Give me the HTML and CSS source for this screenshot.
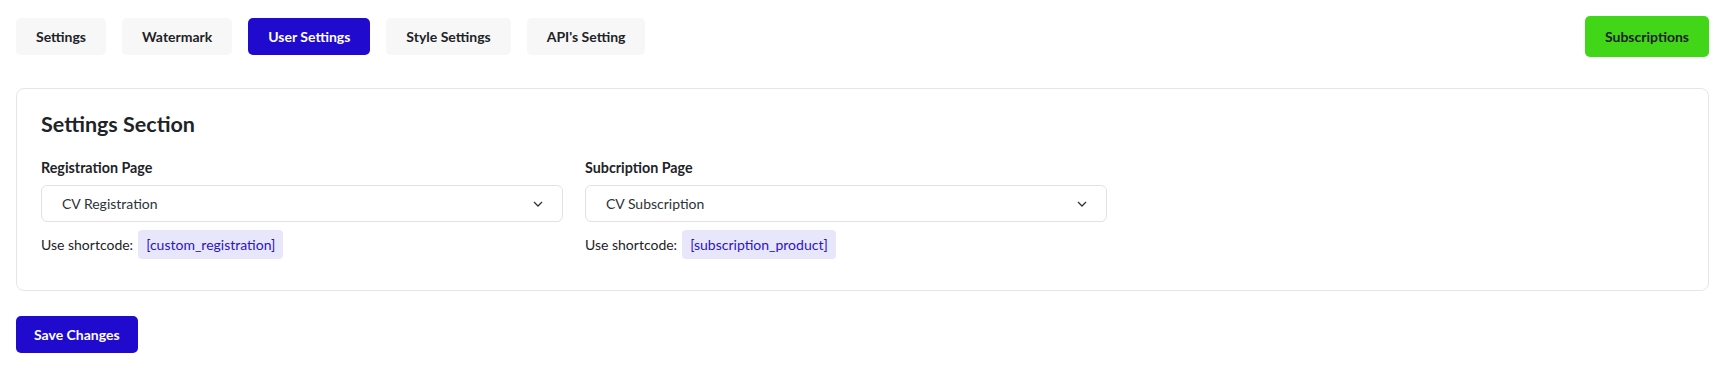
FILE: index.html
```html
<!DOCTYPE html>
<html>
<head>
<meta charset="utf-8">
<link rel="stylesheet" href="styles.css">
</head>
<body>
<div class="page">
  <div class="topbar">
    <nav class="tabs">
      <button class="tab">Settings</button>
      <button class="tab">Watermark</button>
      <button class="tab active">User Settings</button>
      <button class="tab">Style Settings</button>
      <button class="tab">API's Setting</button>
    </nav>
    <button class="subs">Subscriptions</button>
  </div>

  <section class="card">
    <h2 class="card-title">Settings Section</h2>
    <div class="fields">
      <div class="field">
        <label class="field-label">Registration Page</label>
        <div class="select">
          <span>CV Registration</span>
          <svg class="chev" width="10" height="6" viewBox="0 0 10 6"><path d="M1 1l4 4 4-4" fill="none" stroke="#333" stroke-width="1.3"/></svg>
        </div>
        <div class="hint">Use shortcode: <span class="code">[custom_registration]</span></div>
      </div>
      <div class="field">
        <label class="field-label">Subcription Page</label>
        <div class="select">
          <span>CV Subscription</span>
          <svg class="chev" width="10" height="6" viewBox="0 0 10 6"><path d="M1 1l4 4 4-4" fill="none" stroke="#333" stroke-width="1.3"/></svg>
        </div>
        <div class="hint">Use shortcode: <span class="code">[subscription_product]</span></div>
      </div>
    </div>
  </section>

  <button class="save">Save Changes</button>
</div>
</body>
</html>
```

FILE: styles.css
```css
* { box-sizing: border-box; }
body {
  margin: 0;
  background: #fff;
  font-family: Lato, "Noto Sans", sans-serif;
  color: #1d2327;
}
.page {
  padding: 16px 15px 16px 16px;
}
.topbar {
  display: flex;
  align-items: center;
  justify-content: space-between;
}
.tabs {
  display: flex;
  gap: 16px;
}
button {
  font-family: inherit;
  border: none;
  cursor: pointer;
}
.tab {
  height: 37px;
  padding: 0 20px;
  border-radius: 5px;
  background: #f7f7f7;
  color: #1d2327;
  font-size: 14px;
  font-weight: 700;
}
.tab.active {
  background: #1f0acd;
  color: #fff;
}
.subs {
  height: 41px;
  padding: 0 20px;
  border-radius: 5px;
  background: #42d619;
  color: #1d2327;
  font-size: 14px;
  font-weight: 700;
}
.card {
  margin-top: 31px;
  border: 1px solid #e6e6e6;
  border-radius: 8px;
  padding: 22px 24px 31px 24px;
}
.card-title {
  margin: 0 0 22px 0;
  font-size: 21.5px;
  line-height: 26px;
  font-weight: 700;
  color: #1d2327;
}
.fields {
  display: grid;
  grid-template-columns: 522px 522px;
  column-gap: 22px;
}
.field {
  display: flex;
  flex-direction: column;
}
.field-label {
  font-size: 14.3px;
  font-weight: 700;
  line-height: 18px;
  margin-bottom: 8px;
}
.select {
  height: 37px;
  border: 1px solid #e2e2e2;
  border-radius: 6px;
  display: flex;
  align-items: center;
  justify-content: space-between;
  padding: 0 19px 0 20px;
  font-size: 14px;
  color: #2c3338;
}
.chev { display: block; }
.hint {
  margin-top: 8px;
  display: flex;
  align-items: center;
  gap: 5px;
  font-size: 14px;
  color: #1d2327;
}
.code {
  display: inline-flex;
  align-items: center;
  height: 29px;
  padding: 0 8px;
  border-radius: 4px;
  background: #e8e6fb;
  color: #2a14c8;
}
.save {
  margin-top: 25px;
  height: 37px;
  padding: 0 18px;
  border-radius: 5px;
  background: #1f0acd;
  color: #fff;
  font-size: 14px;
  font-weight: 700;
}
```
